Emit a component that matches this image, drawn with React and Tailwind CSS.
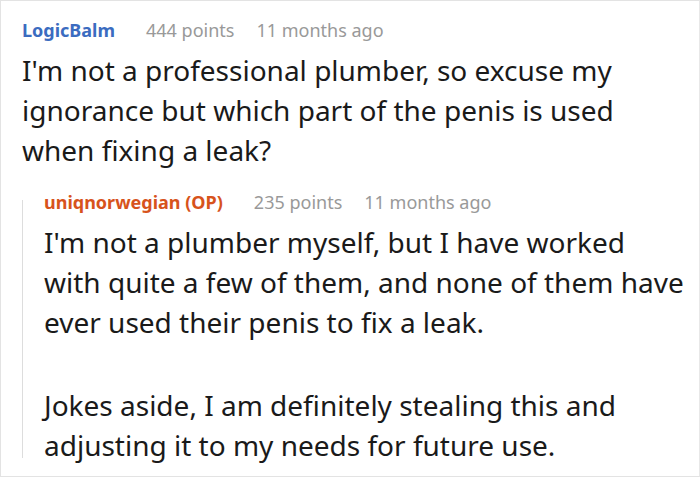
import React from 'react'

const font = { fontFamily: '"Noto Sans", "Open Sans", sans-serif' }

function Meta({ name, nameClass, points, time }) {
  return (
    <div className="flex items-baseline text-[18px] leading-[24px]">
      <span className={`font-bold ${nameClass}`}>{name}</span>
      <span className="ml-[31px] text-[#999999]">{points}</span>
      <span className="ml-[22px] text-[#999999]">{time}</span>
    </div>
  )
}

export default function App() {
  return (
    <div className="h-[478px] w-[700px] overflow-hidden bg-white" style={font}>
      <div className="h-[477px] w-[700px] border border-[#e3e3e3] border-r-[#e8e8e8]">
        <div className="pl-[21px] pr-[11px] pt-[17px]">
          <Meta name="LogicBalm" nameClass="text-[#3b6cc0]" points="444 points" time="11 months ago" />
          <p className="mt-[8px] text-[28px] leading-[40px] text-[#1a1a1a]">
            I'm not a professional plumber, so excuse my ignorance but which part of the penis is used when fixing a leak?
          </p>
          <div className="mt-[20px] flex">
            <div className="w-[1px] shrink-0 bg-[#dddddd] mt-[10px] mb-[7px]" />
            <div className="pl-[21px]">
              <Meta name="uniqnorwegian (OP)" nameClass="text-[#d7531c]" points="235 points" time="11 months ago" />
              <p className="mt-[8px] text-[28px] leading-[40px] text-[#1a1a1a]">
                I'm not a plumber myself, but I have worked with quite a few of them, and none of them have ever used their penis to fix a leak.
              </p>
              <p className="mt-[43px] text-[28px] leading-[40px] text-[#1a1a1a]">
                Jokes aside, I am definitely stealing this and adjusting it to my needs for future use.
              </p>
            </div>
          </div>
        </div>
      </div>
    </div>
  )
}
